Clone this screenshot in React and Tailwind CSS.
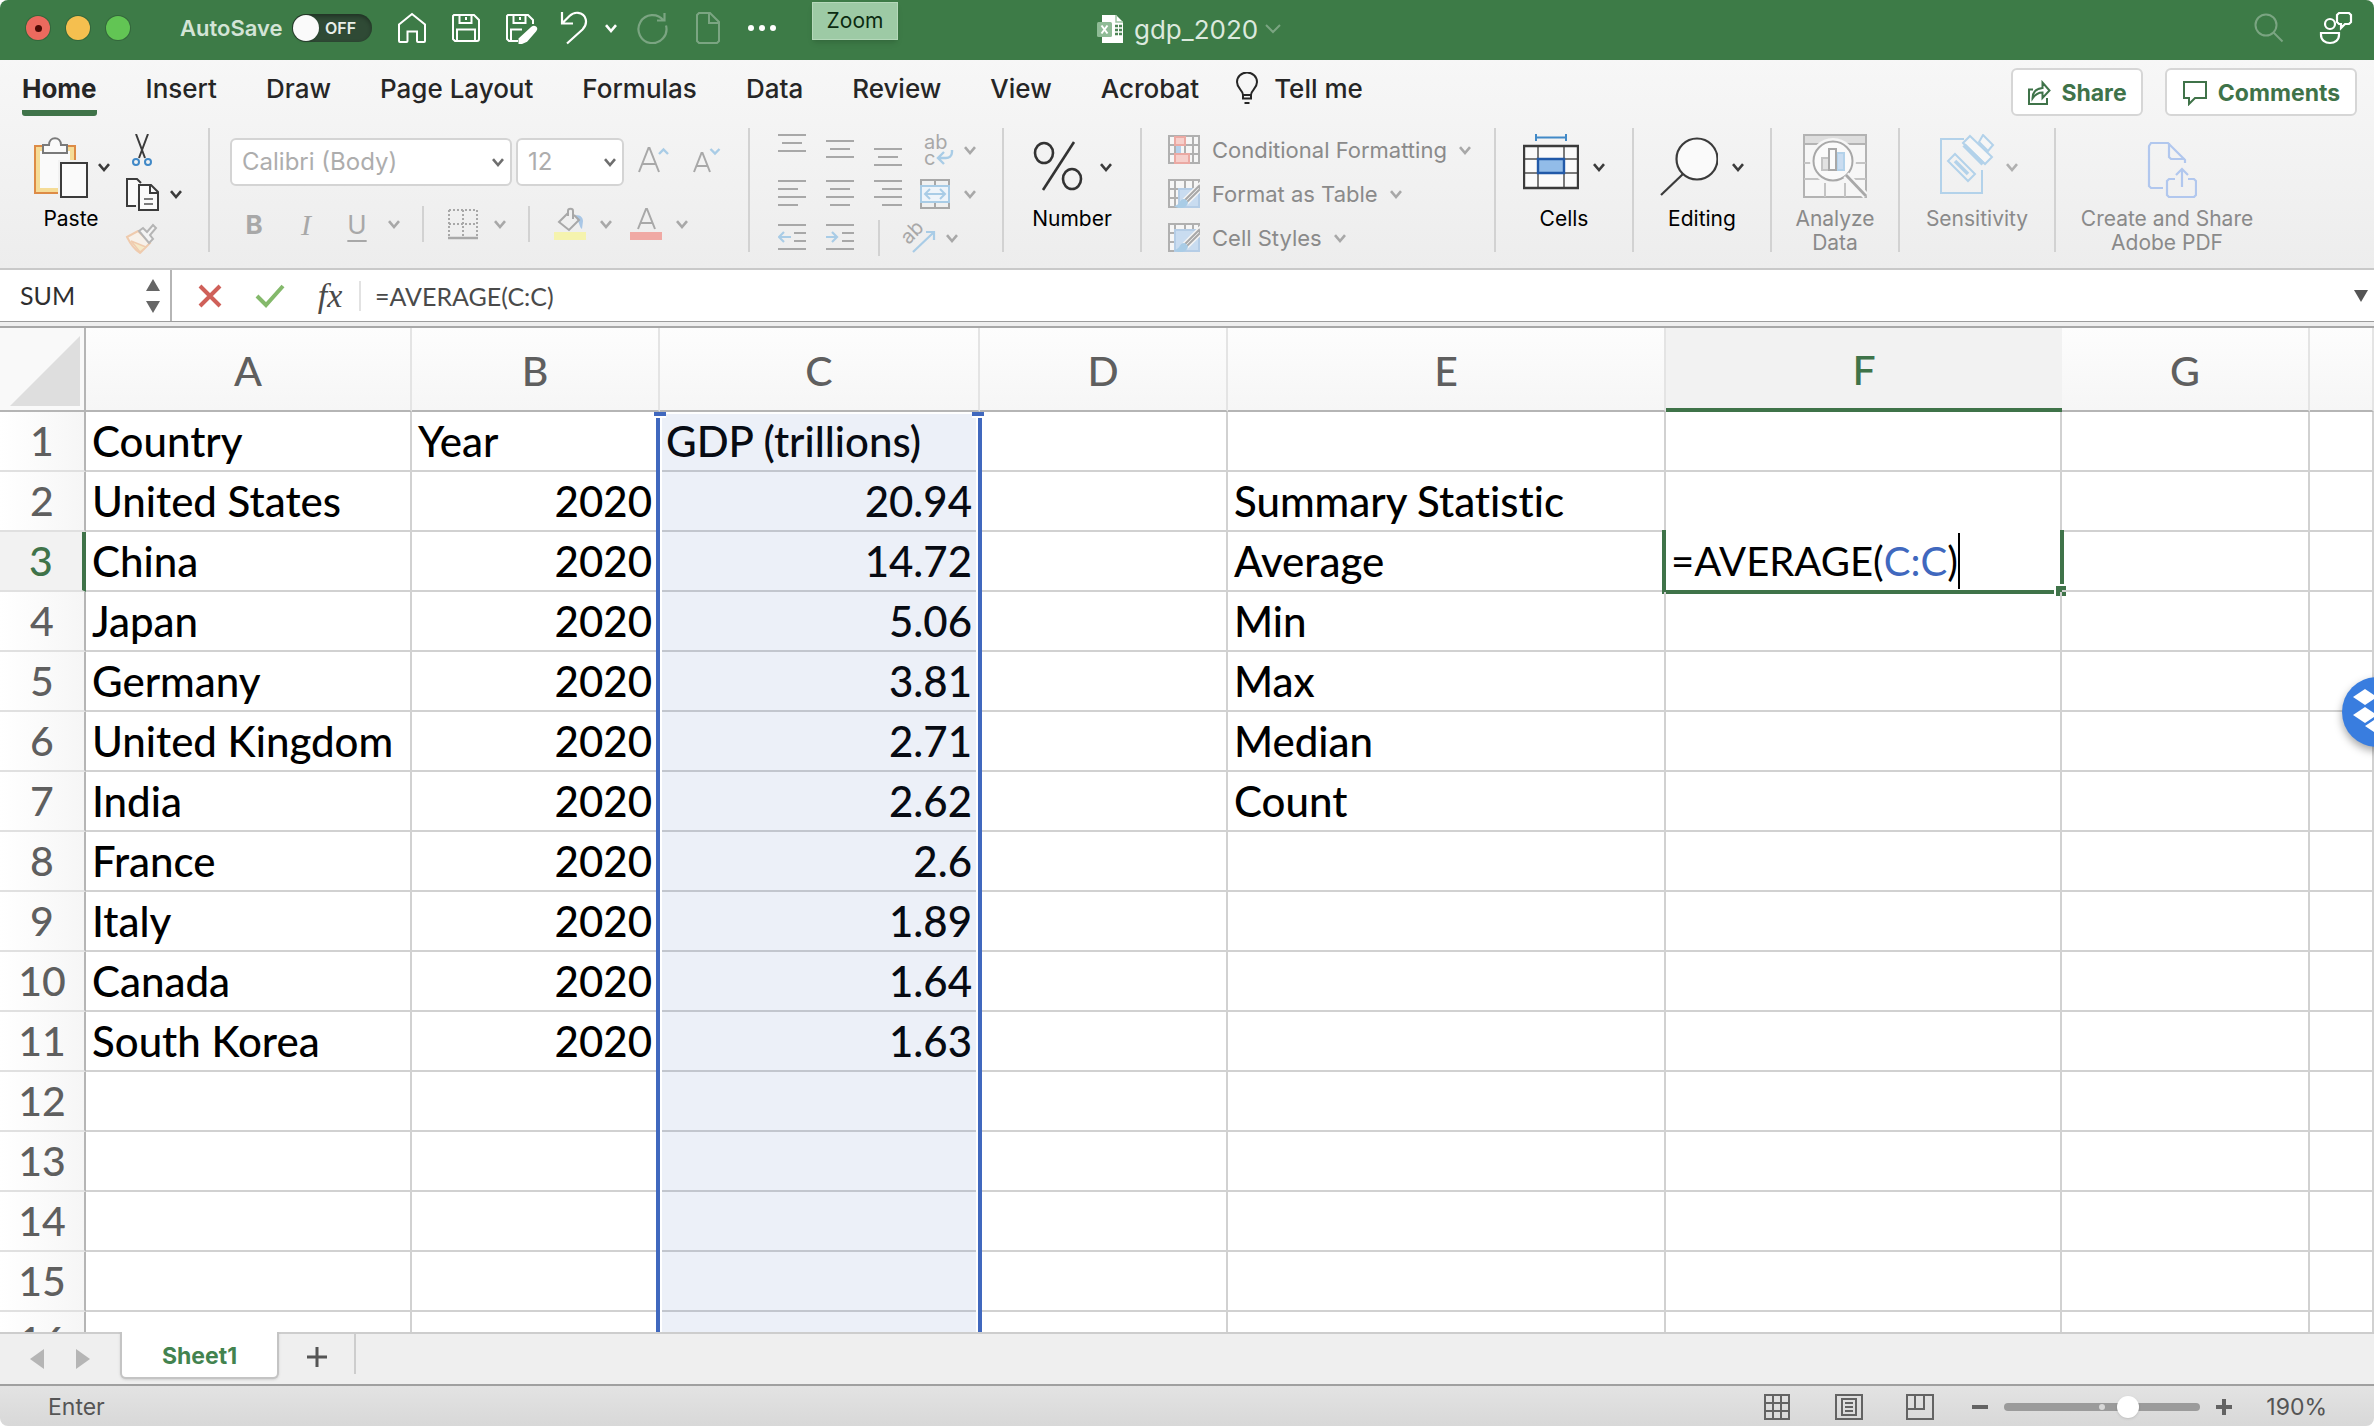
import React from "react";

const UI = "font-['Inter','Liberation_Sans',sans-serif]";
const SHEET = "font-['Lato','Liberation_Sans',sans-serif] [font-variant-ligatures:none]";

function Chevron({ className = "text-[#3b3b3b]" }) {
  return (
    <svg viewBox="0 0 12 9" className={`h-[9px] w-3 shrink-0 ${className}`} fill="none" stroke="currentColor" strokeWidth="2.6">
      <path d="M1 1.2 6 7l5-5.8" />
    </svg>
  );
}

function Icon({ w, h, className = "", children, ...rest }) {
  return (
    <svg width={w} height={h} viewBox={`0 0 ${w} ${h}`} fill="none" className={`shrink-0 ${className}`} {...rest}>
      {children}
    </svg>
  );
}

/* ---------- Title bar ---------- */

function QuickButton({ label, children, className = "" }) {
  return (
    <button type="button" aria-label={label} className={`flex shrink-0 items-center ${className}`}>
      {children}
    </button>
  );
}

function TitleBar() {
  return (
    <header className="relative flex h-[60px] shrink-0 items-center bg-[#3d7b47] pb-1 text-white">
      <div className="flex w-[180px] shrink-0 gap-4 pl-[26px]">
        <button type="button" aria-label="Close" className="flex size-6 items-center justify-center rounded-full bg-[#ec6a5e] ring-1 ring-[#33673b]">
          <span className="size-[7px] rounded-full bg-[#4d0a05]" />
        </button>
        <button type="button" aria-label="Minimize" className="size-6 rounded-full bg-[#f5bf4f] ring-1 ring-[#33673b]" />
        <button type="button" aria-label="Full screen" className="size-6 rounded-full bg-[#62c554] ring-1 ring-[#33673b]" />
      </div>
      <label className="flex w-48 shrink-0 items-center justify-between">
        <span className="whitespace-nowrap text-[22px] font-semibold text-[#d3e4d6]">AutoSave</span>
        <span className="relative flex h-7 w-20 items-center rounded-full bg-[#2f4a35] shadow-[inset_0_2px_4px_rgba(0,0,0,.35)]">
          <input type="checkbox" role="switch" className="absolute inset-0 size-full cursor-pointer opacity-0" />
          <span className="ml-px size-[26px] rounded-full bg-[#fafafa] shadow" />
          <span className="ml-[6px] text-[16px] font-semibold text-[#e8efe9]">OFF</span>
        </span>
      </label>

      <QuickButton label="Home" className="ml-[25px]">
        <Icon w={30} h={32} stroke="#fff" strokeWidth="2">
          <path d="M2 12.5 15 2l13 10.500V29a1 1 0 0 1-1 1h-6a1 1 0 0 1-1-1V19.500H10.500V29a1 1 0 0 1-1 1H3a1 1 0 0 1-1-1z" />
        </Icon>
      </QuickButton>
      <QuickButton label="Save" className="ml-6">
        <Icon w={30} h={30} stroke="#fff" strokeWidth="2">
          <path d="M3 2h20l5 5v19a2 2 0 0 1-2 2H4l-2-2V3zM8.500 2v8h12V2M6 28V16.500h18V28" />
          <path d="M15 4v3" />
        </Icon>
      </QuickButton>
      <QuickButton label="Save a copy" className="ml-6">
        <Icon w={34} h={32} stroke="#fff" strokeWidth="2">
          <path d="M13 29H4l-2-2V4l1-1h20l5 5v4M8.500 3v8h12V3M15 5v3M6 29V17.500h11" />
          <path d="M27 15.500c2.500-2 5.500.5 3.500 3L21.500 29 14.500 32v-5z" fill="#fff" />
        </Icon>
      </QuickButton>
      <QuickButton label="Undo" className="ml-[21px]">
        <Icon w={28} h={34} stroke="#fff" strokeWidth="2.200">
          <path d="M2 1v11.500h11M2 12.500 9.500 5C12 2.500 15 1.500 18 1.800c8.500.9 10.500 10.700 4.500 16.700L7 32.500" />
        </Icon>
      </QuickButton>
      <QuickButton label="Undo history" className="ml-[17px]">
        <Chevron className="text-white" />
      </QuickButton>
      <QuickButton label="Redo" className="ml-5">
        <Icon w={32} h={32} stroke="#7ba582" strokeWidth="2.200">
          <path d="M29 13.500A14 14 0 1 1 26.500 8.500M27.500 1v7.500H20" />
        </Icon>
      </QuickButton>
      <QuickButton label="New" className="ml-[26px]">
        <Icon w={26} h={32} stroke="#7ba582" strokeWidth="2">
          <path d="M4 1h11l9 9v19l-2 2H4l-2-2V3zM14 1v10h10" />
        </Icon>
      </QuickButton>
      <QuickButton label="More commands" className="ml-[27px] gap-[5px]">
        <span className="size-[6px] rounded-full bg-white" />
        <span className="size-[6px] rounded-full bg-white" />
        <span className="size-[6px] rounded-full bg-white" />
      </QuickButton>

      <div role="tooltip" className="absolute left-[812px] top-[2px] h-[38px] w-[86px] border border-[#b5d8ba] bg-[#9dcaa5] text-center text-[21px] leading-9 text-[#0b2b11] shadow-md">
        Zoom
      </div>

      <div className="absolute inset-x-0 top-0 mx-auto flex h-[58px] w-[180px] items-center whitespace-nowrap">
        <Icon w={27} h={30}>
          <path d="M5 1h14l7 7v21H5z" fill="#fff" />
          <path d="M19 1v7h7" stroke="#9dc3a3" strokeWidth="1.500" />
          <path d="M18 12h7M18 16h7M18 20h7" stroke="#4c8455" strokeWidth="2.500" strokeDasharray="3 1" />
          <rect x="0" y="8" width="15" height="15" rx="1.500" fill="#8fbb96" />
          <path d="m4.500 11.500 6 8m0-8-6 8" stroke="#fff" strokeWidth="2" />
        </Icon>
        <h1 className="ml-[10px] text-[26px] text-[#dce9de]">gdp_2020</h1>
        <Icon w={18} h={12} className="ml-[6px]" stroke="#7ba582" strokeWidth="2">
          <path d="m2 2 7 7 7-7" />
        </Icon>
      </div>

      <QuickButton label="Search" className="ml-auto">
        <Icon w={30} h={30} stroke="#7ba582" strokeWidth="2">
          <circle cx="12" cy="12" r="10.500" />
          <path d="m19.500 19.500 9 9" />
        </Icon>
      </QuickButton>
      <QuickButton label="Share with people" className="ml-[35px] mr-[21px]">
        <Icon w={34} h={34} stroke="#fff" strokeWidth="2.200">
          <circle cx="11" cy="13" r="5" />
          <path d="M2 22h18v2c0 5-4 8-9 8s-9-3-9-8zM20 2h10l2 2v7l-2 2h-4l-4 4v-4h-2l-2-2V4z" />
        </Icon>
      </QuickButton>
    </header>
  );
}

/* ---------- Ribbon ---------- */

const TABS = ["Home", "Insert", "Draw", "Page Layout", "Formulas", "Data", "Review", "View", "Acrobat"];

function Tabs() {
  return (
    <nav className="flex h-[60px] items-start pl-[22px] pr-[17px] text-[26px] font-medium text-[#262626]">
      <div className="flex gap-[49px]">
        {TABS.map((t, i) => (
          <button
            key={t}
            type="button"
            className={`h-14 whitespace-nowrap border-b-[6px] pt-2 leading-[42px] ${i === 0 ? "rounded-[3px] border-[#3f7349] font-bold" : "border-transparent"}`}
          >
            {t}
          </button>
        ))}
      </div>
      <button type="button" className="ml-[36px] flex h-14 items-center gap-[15px] whitespace-nowrap">
        <Icon w={24} h={32} stroke="#262626" strokeWidth="2">
          <path d="M8 23c0-5-6-6-6-13a10 9.500 0 0 1 20 0c0 7-6 8-6 13zM8 23v3.500h8V23M9.500 31h5" />
        </Icon>
        Tell me
      </button>
      <div className="ml-auto flex gap-[22px] pt-2 text-[23px] font-bold text-[#3f7349]">
        <button type="button" className="flex h-12 w-[132px] items-center justify-center gap-[10px] rounded-md border-2 border-[#d6d6d6] bg-white pt-[2px]">
          <Icon w={24} h={26} stroke="#3f7349" strokeWidth="2">
            <path d="M6 9.500H2V24h18v-6M5.500 18.500c0-7 4-10 10-10.500V2.500l7 8-7 7.500v-5.500c-4 0-7 1.500-10 6z" />
          </Icon>
          Share
        </button>
        <button type="button" className="flex h-12 w-[192px] items-center justify-center gap-[10px] rounded-md border-2 border-[#d6d6d6] bg-white pt-[2px]">
          <Icon w={26} h={26} stroke="#3f7349" strokeWidth="2">
            <path d="M2 2h22v16H13l-6 6v-6H2z" />
          </Icon>
          Comments
        </button>
      </div>
    </nav>
  );
}

function Group({ className = "", children, last }) {
  return (
    <section className={`flex h-[124px] shrink-0 ${last ? "" : "border-r-2 border-[#d2d2d2]"} ${className}`}>{children}</section>
  );
}

function BigButton({ label, icon, gap = "gap-[14px]", chevron = "text-[#3b3b3b]", text = "text-black", noChevron, className = "" }) {
  return (
    <button type="button" className={`flex shrink-0 flex-col items-center self-start pt-[6px] text-[21px] leading-6 ${text} ${className}`}>
      <span className={`flex h-[73px] items-start ${gap}`}>
        {icon}
        {!noChevron && (
          <span className="mt-[29px]">
            <Chevron className={chevron} />
          </span>
        )}
      </span>
      <span className="whitespace-pre text-center">{label}</span>
    </button>
  );
}

function SmallButton({ label, className = "", chevron, children }) {
  return (
    <button type="button" aria-label={label} className={`flex shrink-0 items-center gap-4 ${className}`}>
      {children}
      {chevron && <Chevron className={chevron} />}
    </button>
  );
}

function Combo({ label, value, options, className }) {
  return (
    <span className={`relative flex h-12 shrink-0 items-center ${className}`}>
      <select aria-label={label} defaultValue={value} className="size-full appearance-none rounded-md border-2 border-[#d4d4d4] bg-white pl-[10px] text-[24px] text-[#adadad]">
        {options.map((o) => (
          <option key={o}>{o}</option>
        ))}
      </select>
      <Chevron className="pointer-events-none absolute right-2 text-[#6e6e6e]" />
    </span>
  );
}

function Lines({ d, h = 28 }) {
  return (
    <Icon w={28} h={h} stroke="#a8a8a8" strokeWidth="2">
      <path d={d} />
    </Icon>
  );
}

function ClipboardGroup() {
  return (
    <Group className="w-[210px]">
      <BigButton
        label="Paste"
        gap="gap-[10px]"
        className="ml-8 w-[78px]"
        icon={
          <Icon w={56} h={66}>
            <path d="M3 12h40v47H3z" fill="#f5dc97" stroke="#dd8b46" strokeWidth="2" />
            <path d="M8 17h30v37H8z" fill="#fafafa" />
            <path d="M11 11h6c0-9 12-9 12 0h6v8H11z" fill="#fafafa" stroke="#7a7a7a" strokeWidth="2" />
            <path d="M26 26h30v34H26z" fill="#f2f2f2" />
            <path d="M29 29h26v34H29z" fill="#fafafa" stroke="#3b3b3b" strokeWidth="2" />
          </Icon>
        }
      />
      <div className="ml-[15px] flex flex-col items-start pt-[6px]">
        <SmallButton label="Cut" className="ml-[6px] h-8">
          <Icon w={22} h={32}>
            <path d="M5 0 14 24M17 0 8 24" stroke="#3b3b3b" strokeWidth="2" />
            <circle cx="5" cy="28" r="3" stroke="#4189c7" strokeWidth="2" />
            <circle cx="17" cy="28" r="3" stroke="#4189c7" strokeWidth="2" />
          </Icon>
        </SmallButton>
        <SmallButton label="Copy" chevron="text-[#3b3b3b]" className="mt-3 h-8 !gap-[11px]">
          <Icon w={34} h={34} stroke="#3b3b3b" strokeWidth="2">
            <path d="M11 29H2V2h10l4 4" fill="#fafafa" />
            <path d="M14 8h12l7 7v18H14z" fill="#fafafa" />
            <path d="M25 8v8h8" />
            <path d="M19 22h9M19 27h9" stroke="#7a7a7a" />
          </Icon>
        </SmallButton>
        <SmallButton label="Format painter" className="mt-[12px] h-8">
          <Icon w={34} h={32}>
            <path d="M2 15l11-6 12 12-10 10C9 27 5 21 2 15z" fill="#f7f1ea" stroke="#efcbae" strokeWidth="2" />
            <path d="M6 19l15 6-6 5z" fill="#f5e9c8" stroke="#efcbae" strokeWidth="1.500" />
            <path d="m14 9 4-3 4 4 6-7 3 3-6 7 3 4-4 4z" fill="#f4f4f4" stroke="#b5b5b5" strokeWidth="2" />
          </Icon>
        </SmallButton>
      </div>
    </Group>
  );
}

function FontGroup() {
  return (
    <Group className="w-[540px] flex-col pl-5 pt-[10px]">
      <div className="flex items-center">
        <Combo label="Font" value="Calibri (Body)" options={["Calibri (Body)", "Arial"]} className="w-[282px]" />
        <Combo label="Font size" value="12" options={["12", "14"]} className="ml-1 w-[108px]" />
        <SmallButton label="Increase font size" className="ml-[14px]">
          <Icon w={32} h={30} strokeWidth="2">
            <path d="M1 25 10.500 1h1L21 25M4 17h14" stroke="#a8a8a8" />
            <path d="m21 7 4.500-4.500L30 7" stroke="#a9cce6" strokeWidth="2.400" />
          </Icon>
        </SmallButton>
        <SmallButton label="Decrease font size" className="ml-[23px]">
          <Icon w={30} h={30} strokeWidth="2">
            <path d="M1 25 8.500 6h1L17 25M4 19h10" stroke="#a8a8a8" />
            <path d="m17.500 2 4.500 4.500L26.500 2" stroke="#a9cce6" strokeWidth="2.400" />
          </Icon>
        </SmallButton>
      </div>
      <div className="mt-[20px] flex h-9 items-center text-[26px] text-[#a8a8a8]">
        <button type="button" aria-label="Bold" className="ml-[14px] w-5 font-bold">B</button>
        <button type="button" aria-label="Italic" className="ml-8 w-5 font-['Liberation_Serif',serif] text-[30px] italic">I</button>
        <button type="button" aria-label="Underline" className="ml-[31px] w-5 underline decoration-2 underline-offset-[6px]">U</button>
        <Chevron className="ml-[21px] text-[#a8a8a8]" />
        <span className="ml-[22px] h-9 w-[2px] bg-[#d2d2d2]" />
        <SmallButton label="Borders" chevron="text-[#a8a8a8]" className="ml-6">
          <Icon w={30} h={32} stroke="#a8a8a8" strokeWidth="2">
            <path d="M1 2h28M1 16h28M1 2v27M15 2v27M29 2v27" strokeDasharray="2 2" />
            <path d="M0 30h30" strokeWidth="2.500" />
          </Icon>
        </SmallButton>
        <span className="ml-[22px] h-9 w-[2px] bg-[#d2d2d2]" />
        <SmallButton label="Fill color" chevron="text-[#a8a8a8]" className="ml-6 !gap-[14px]">
          <Icon w={32} h={34}>
            <path d="M0 25h32v8H0z" fill="#f5f3ae" />
            <path d="M22 8c5 0 7 3 7 6l-1 8c-3-2-2-6-5-9z" fill="#a9c7e6" />
            <path d="M14 6 5 15l10 8 10-10-5-5" stroke="#a8a8a8" strokeWidth="2" />
            <path d="M14 9V4c0-3 5-3 5 0v8" stroke="#a8a8a8" strokeWidth="2" />
          </Icon>
        </SmallButton>
        <SmallButton label="Font color" chevron="text-[#a8a8a8]" className="ml-[18px] !gap-[14px]">
          <Icon w={32} h={34}>
            <path d="M0 25h32v8H0z" fill="#f0a9a4" />
            <path d="M8 22 16 2h1l8 20M11 16h11" stroke="#a8a8a8" strokeWidth="2" />
          </Icon>
        </SmallButton>
      </div>
    </Group>
  );
}

function AlignmentGroup() {
  return (
    <Group className="w-[254px] flex-col pl-7 pt-[6px]">
      <div className="flex h-8 items-start gap-5">
        <SmallButton label="Align top"><Lines h={32} d="M0 1h28M4 9h20M0 17h28" /></SmallButton>
        <SmallButton label="Align middle"><Lines h={32} d="M0 7h28M4 15h20M0 23h28" /></SmallButton>
        <SmallButton label="Align bottom"><Lines h={32} d="M0 15h28M4 23h20M0 31h28" /></SmallButton>
        <SmallButton label="Wrap text" chevron="text-[#a8a8a8]" className="h-8 !gap-[10px]">
          <span className="relative h-8 w-[32px] pl-[2px] text-left text-[20px] leading-4 text-[#a8a8a8]">
            ab<br />c
            <Icon w={18} h={18} className="absolute bottom-0 right-0" stroke="#a9cce6" strokeWidth="2.400">
              <path d="M16 2v2c0 4-3 6-6 6H2M8 4l-6 6 6 6" />
            </Icon>
          </span>
        </SmallButton>
      </div>
      <div className="mt-3 flex h-8 items-center gap-5">
        <SmallButton label="Align left"><Lines d="M0 1h28M0 9h20M0 17h28M0 25h20" /></SmallButton>
        <SmallButton label="Center"><Lines d="M0 1h28M4 9h20M0 17h28M4 25h20" /></SmallButton>
        <SmallButton label="Align right"><Lines d="M0 1h28M8 9h20M0 17h28M8 25h20" /></SmallButton>
        <SmallButton label="Merge and center" chevron="text-[#a8a8a8]" className="-ml-[2px] !gap-[14px]">
          <Icon w={30} h={32} strokeWidth="2">
            <path d="M1 2h28v28H1zM15 2v6M15 24v6" stroke="#a8a8a8" />
            <path d="M1 8h28v16H1z" fill="#eef4fa" stroke="#a9cce6" />
            <path d="M6 16h18M10 11l-5 5 5 5M20 11l5 5-5 5" stroke="#a9cce6" />
          </Icon>
        </SmallButton>
      </div>
      <div className="mt-3 flex h-8 items-center gap-5">
        <SmallButton label="Decrease indent">
          <Icon w={28} h={28} strokeWidth="2">
            <path d="M0 1h28M16 9h12M16 17h12M0 25h28" stroke="#a8a8a8" />
            <path d="M1 13h12M6 8l-5 5 5 5" stroke="#a9cce6" strokeWidth="2.200" />
          </Icon>
        </SmallButton>
        <SmallButton label="Increase indent">
          <Icon w={28} h={28} strokeWidth="2">
            <path d="M0 1h28M16 9h12M16 17h12M0 25h28" stroke="#a8a8a8" />
            <path d="M0 13h11M6 8l5 5-5 5" stroke="#a9cce6" strokeWidth="2.200" />
          </Icon>
        </SmallButton>
        <span className="ml-1 h-9 w-[2px] bg-[#d2d2d2]" />
        <SmallButton label="Orientation" chevron="text-[#a8a8a8]" className="!gap-[10px]">
          <span className="relative h-8 w-9">
            <span className="absolute left-0 top-0 -rotate-45 text-[20px] leading-5 text-[#a8a8a8]">ab</span>
            <Icon w={26} h={24} className="absolute bottom-0 right-0" stroke="#a9cce6" strokeWidth="2.200">
              <path d="M3 22 23 3M16 2h8v8" />
            </Icon>
          </span>
        </SmallButton>
      </div>
    </Group>
  );
}

function TableGlyph({ kind }) {
  return (
    <Icon w={32} h={30} strokeWidth="2">
      <path d="M1 1h30v27H1zM1 10h30M1 19h30M7 1v27M17 1v27M25 1v27" fill="#f6f6f6" stroke="#b0b0b0" />
      {kind === "conditional" && (
        <>
          <path d="M7 2h10v8H7zM7 19h14v9H7z" fill="#f6cfcb" stroke="#eba9a3" />
          <path d="M8 11h5v7H8z" fill="#b5d1ec" />
        </>
      )}
      {kind !== "conditional" && (
        <>
          <path d={kind === "table" ? "M11 10h20v18H11z" : "M7 7h24v21H7z"} fill="#c9dcf0" stroke="#b5cde6" />
          <path d="M31 7 17 21l-1 3 3-1L32 10z" fill="#f4f4f4" stroke="#f4f4f4" strokeWidth="5" />
          <path d="M31 7 17 21l-1 3 3-1L32 10z" fill="#f4f4f4" stroke="#a8a8a8" />
          <path d="M17 20c-6-1-4 6-11 7 5 4 14 2 14-4z" fill="#a9cce6" />
        </>
      )}
    </Icon>
  );
}

function StylesGroup() {
  const rows = [
    ["conditional", "Conditional Formatting"],
    ["table", "Format as Table"],
    ["cell", "Cell Styles"],
  ];
  return (
    <Group className="w-[354px] flex-col gap-3 pl-[26px] pt-[6px] text-[22px] text-[#8a8a8a]">
      {rows.map(([kind, label]) => (
        <button key={kind} type="button" className="flex h-8 items-center gap-3 whitespace-nowrap">
          <TableGlyph kind={kind} />
          <span>{label}</span>
          <Chevron className="text-[#a8a8a8]" />
        </button>
      ))}
    </Group>
  );
}

function Ribbon() {
  return (
    <div className="shrink-0 border-b-2 border-[#c9c9c9] bg-linear-to-b from-[#f7f7f7] to-[#ededed]">
      <Tabs />
      <div className="flex h-[148px] overflow-hidden pt-2">
        <ClipboardGroup />
        <FontGroup />
        <AlignmentGroup />
        <Group className="w-[138px] justify-center">
          <BigButton
            label="Number"
            gap="gap-[17px]"
            icon={
              <Icon w={50} h={60} stroke="#333" strokeWidth="2.600">
                <ellipse cx="11" cy="19" rx="9" ry="10" />
                <ellipse cx="39" cy="45" rx="9" ry="10" />
                <path d="M41 8 10 56" />
              </Icon>
            }
          />
        </Group>
        <StylesGroup />
        <Group className="w-[138px] justify-center">
          <BigButton
            label="Cells"
            icon={
              <Icon w={56} h={56}>
                <path d="M13 3.500h30M13 0v7M43 0v7" stroke="#4189c7" strokeWidth="2" />
                <path d="M1 12h54v42H1z" fill="#fafafa" />
                <path d="M1 25h54M1 39h54M15 12v42M41 12v42" stroke="#7a7a7a" strokeWidth="2" />
                <path d="M15 25h26v14H15z" fill="#92bce8" stroke="#2159a8" strokeWidth="2.400" />
                <path d="M1 12h54v42H1z" stroke="#3b3b3b" strokeWidth="2.400" />
              </Icon>
            }
          />
        </Group>
        <Group className="w-[138px] justify-center">
          <BigButton
            label="Editing"
            icon={
              <Icon w={58} h={62} stroke="#3b3b3b" strokeWidth="2.200">
                <circle cx="37" cy="25" r="20.500" fill="#fafafa" />
                <path d="M23 40 1 61" />
              </Icon>
            }
          />
        </Group>
        <Group className="w-[128px] justify-center">
          <BigButton
            label={"Analyze\nData"}
            noChevron
            text="text-[#8a8a8a]"
            icon={
              <Icon w={64} h={64} stroke="#b3b3b3" strokeWidth="2">
                <path d="M1 1h62v62H1z" fill="#f6f6f6" />
                <path d="M1 1h62v9H1z" fill="#dedede" />
                <path d="M1 29h62M1 45h62M22 49v14M42 49v14" stroke="#c4c4c4" />
                <circle cx="30" cy="27" r="23" fill="#f6f6f6" stroke="none" />
                <circle cx="30" cy="27" r="19.500" fill="#fafafa" stroke="#a8a8a8" />
                <path d="M19 24h7v12h-7z" fill="#e2e2e2" stroke="#c4c4c4" />
                <path d="M34 19h7v17h-7z" fill="#c9dcf0" stroke="#b3d2ea" />
                <path d="M26 15h7v21h-7z" fill="#fafafa" stroke="#a8a8a8" />
                <path d="m43 41 20 21" stroke="#f6f6f6" strokeWidth="7" />
                <path d="m43 41 20 21" stroke="#a8a8a8" strokeWidth="2.800" />
              </Icon>
            }
          />
        </Group>
        <Group className="w-[156px] justify-center">
          <BigButton
            label="Sensitivity"
            gap="gap-[10px]"
            chevron="text-[#b0b0b0]"
            text="text-[#8a8a8a]"
            icon={
              <Icon w={56} h={62} className="ml-1" stroke="#b3d2ea" strokeWidth="2">
                <path d="M24 5H1v54h41V36" />
                <path d="m15 20 20 20-7 7L8 27z" fill="#f2f2f2" />
                <path d="m15 27 13 13" strokeWidth="3.500" />
                <path d="m43 1 10 10-5 6-9-9z" fill="#f6f6f6" />
                <path d="m30 2 22 21-7 7L23 9z" fill="#f6f6f6" />
                <path d="m24 11 19 19" strokeWidth="4.500" />
              </Icon>
            }
          />
        </Group>
        <Group last className="w-[222px] justify-center">
          <BigButton
            label={"Create and Share\nAdobe PDF"}
            noChevron
            text="text-[#8a8a8a]"
            icon={
              <Icon w={50} h={64} className="ml-[10px]" stroke="#b1c7ee" strokeWidth="2.200">
                <path d="M16 54H4l-2-2V12l2-3h17l17 17v3M22 9v14l2 2h14" />
                <path d="M28 45h-6l-2 2v14l2 2h25l2-2V47l-2-2h-6M35 53V35M29 41l6-6 6 6" />
              </Icon>
            }
          />
        </Group>
      </div>
    </div>
  );
}

/* ---------- Formula bar ---------- */

function FormulaBar() {
  return (
    <div className={`flex h-[52px] shrink-0 items-center border-b border-[#9d9d9d] bg-white ${SHEET}`}>
      <div className="flex h-full w-[172px] shrink-0 items-center border-r-2 border-[#b5b5b5] pl-5 pr-[10px]">
        <input aria-label="Name box" defaultValue="SUM" className="w-full min-w-0 bg-transparent text-[25px] text-[#2f2f2f] outline-none" />
        <Icon w={14} h={36} fill="#666">
          <path d="M7 1l7 12H0zM7 35l7-12H0z" fill="#666" />
        </Icon>
      </div>
      <button type="button" aria-label="Cancel" className="ml-[26px]">
        <Icon w={24} h={24} stroke="#cf6059" strokeWidth="4">
          <path d="m2 2 20 20M22 2 2 22" />
        </Icon>
      </button>
      <button type="button" aria-label="Enter" className="ml-[33px]">
        <Icon w={30} h={24} stroke="#84b96b" strokeWidth="4">
          <path d="m2 12 9 9L28 2" />
        </Icon>
      </button>
      <button type="button" aria-label="Insert function" className="ml-[30px] w-[30px] font-['Liberation_Serif',serif] text-[34px] italic leading-[48px] text-[#4a4a4a]">
        fx
      </button>
      <span className="ml-[14px] h-[30px] w-[2px] bg-[#e2e2e2]" />
      <input aria-label="Formula" defaultValue="=AVERAGE(C:C)" className="ml-[14px] min-w-0 flex-1 bg-transparent pt-[2px] text-[25px] text-[#4a4a4a] outline-none" />
      <button type="button" aria-label="Expand formula bar" className="mr-[6px]">
        <Icon w={14} h={12}>
          <path d="M0 0h14L7 12z" fill="#555" />
        </Icon>
      </button>
    </div>
  );
}

/* ---------- Sheet ---------- */

const COLS = [
  ["A", "w-[326px]"],
  ["B", "w-[248px]"],
  ["C", "w-[320px]"],
  ["D", "w-[248px]"],
  ["E", "w-[438px]"],
  ["F", "w-[396px]"],
  ["G", "w-[248px]"],
  ["", ""],
];

const DATA = {
  1: { A: "Country", B: "Year", C: "GDP (trillions)" },
  2: { A: "United States", B: 2020, C: 20.94, E: "Summary Statistic" },
  3: { A: "China", B: 2020, C: 14.72, E: "Average" },
  4: { A: "Japan", B: 2020, C: 5.06, E: "Min" },
  5: { A: "Germany", B: 2020, C: 3.81, E: "Max" },
  6: { A: "United Kingdom", B: 2020, C: 2.71, E: "Median" },
  7: { A: "India", B: 2020, C: 2.62, E: "Count" },
  8: { A: "France", B: 2020, C: 2.6 },
  9: { A: "Italy", B: 2020, C: 1.89 },
  10: { A: "Canada", B: 2020, C: 1.64 },
  11: { A: "South Korea", B: 2020, C: 1.63 },
};

function CellEditor() {
  return (
    <div className="absolute -left-1 -right-1 -top-[2px] bottom-[-4px] flex items-center border-x-4 border-b-4 border-[#3f7349] bg-white pl-[5px] pt-[2px] text-[40px] font-normal text-black">
      <span>=AVERAGE(</span>
      <span className="text-[#4068be]">C:C</span>
      <span>)</span>
      <span className="h-14 w-[2px] bg-black" />
      <span className="absolute -bottom-[6px] -right-[6px] size-3 border-l-2 border-t-2 border-white bg-[#3f7349]" />
    </div>
  );
}

function ColumnSelection() {
  return (
    <div className="pointer-events-none absolute -left-1 -right-1 top-full z-10 mt-[2px] h-screen border-x-4 border-[#4068be]">
      <div className="h-full border-x-2 border-t-2 border-white bg-[#4068be]/10 bg-clip-padding" />
      <span className="absolute -left-[6px] top-0 h-[6px] w-3 border-b-2 border-white bg-[#4068be]" />
      <span className="absolute -right-[6px] top-0 h-[6px] w-3 border-b-2 border-white bg-[#4068be]" />
    </div>
  );
}

function Sheet() {
  const rows = Array.from({ length: 16 }, (_, i) => i + 1);
  return (
    <main className={`relative min-h-0 flex-1 overflow-hidden bg-white text-[41px] leading-[58px] ${SHEET}`}>
      <table className="w-full table-fixed border-separate border-spacing-0">
        <colgroup>
          <col className="w-[86px]" />
          {COLS.map(([name, w]) => (
            <col key={name} className={w} />
          ))}
        </colgroup>
        <thead>
          <tr className="h-[84px] text-[#5f5f5f]">
            <th className="border-b-2 border-r-2 border-[#b5b5b5] bg-[#f9f9f9] p-0 align-bottom">
              <button type="button" aria-label="Select all" className="ml-[10px] block">
                <Icon w={70} h={74}>
                  <path d="M70 0v70H0z" fill="#dedede" />
                </Icon>
              </button>
            </th>
            {COLS.map(([name]) => (
              <th
                key={name}
                scope="col"
                className={
                  name === "F"
                    ? "relative border-b-4 border-[#3f7349] bg-[#f2f2f2] p-0 pt-1 font-medium text-[#3f7349]"
                    : "relative border-b-2 border-r-2 border-b-[#b5b5b5] border-r-[#e4e4e4] bg-linear-to-b from-[#fdfdfd] to-[#f6f6f6] p-0 pt-1 font-medium"
                }
              >
                {name}
                {name === "C" && <ColumnSelection />}
              </th>
            ))}
          </tr>
        </thead>
        <tbody>
          {rows.map((r) => (
            <tr key={r} className="h-[60px]">
              <th
                scope="row"
                className={
                  r === 3
                    ? "border-b-2 border-r-4 border-b-[#e0e0e0] border-r-[#3f7349] bg-[#f2f2f2] p-0 font-medium text-[#3f7349]"
                    : "border-b-2 border-r-2 border-b-[#e0e0e0] border-r-[#b5b5b5] bg-linear-to-r from-white to-[#f6f6f6] p-0 font-medium text-[#5f5f5f]"
                }
              >
                {r}
              </th>
              {COLS.map(([name]) => {
                const v = DATA[r]?.[name];
                const border = name === "F" && r === 2 ? "border-b-white" : "border-b-[#d1d1d1]";
                return (
                  <td
                    key={name}
                    className={`relative whitespace-nowrap border-b-2 border-r-2 border-r-[#d1d1d1] px-[6px] py-0 text-[42px] font-medium text-black ${border} ${typeof v === "number" ? "text-right" : "text-left"}`}
                  >
                    {v}
                    {name === "F" && r === 3 && <CellEditor />}
                  </td>
                );
              })}
            </tr>
          ))}
        </tbody>
      </table>
      <button type="button" aria-label="Dropbox" className="absolute -right-[38px] top-[349px] z-20 flex size-[70px] items-center justify-center rounded-full bg-[#397ddf] shadow-[0_4px_8px_rgba(0,0,0,.35)]">
        <Icon w={48} h={46} fill="#fff">
          <path d="M12 0l12 8-12 8L0 8zM36 0l12 8-12 8-12-8zM12 18l12 8-12 8-12-8zM36 18l12 8-12 8-12-8zM24 29l12 8-12 8-12-8z" fill="#fff" />
        </Icon>
      </button>
    </main>
  );
}

/* ---------- Bottom bars ---------- */

function SheetTabs() {
  return (
    <div className="flex h-[52px] shrink-0 items-start border-t-2 border-[#cdcdcd] bg-[#efefef]">
      <button type="button" aria-label="Previous sheet" className="ml-[30px] mt-[15px]">
        <Icon w={14} h={20}><path d="M14 0v20L0 10z" fill="#b5b5b5" /></Icon>
      </button>
      <button type="button" aria-label="Next sheet" className="ml-8 mt-[15px]">
        <Icon w={14} h={20}><path d="M0 0v20l14-10z" fill="#b5b5b5" /></Icon>
      </button>
      <button type="button" className="-mt-[2px] ml-[30px] h-[47px] w-[159px] rounded-b-md border-2 border-t-0 border-[#c4c4c4] bg-white pt-1 text-[23px] font-bold text-[#43834f] shadow-sm">
        Sheet1
      </button>
      <button type="button" aria-label="New sheet" className="ml-7 mt-[13px]">
        <Icon w={20} h={20} stroke="#555" strokeWidth="3"><path d="M10 0v20M0 10h20" /></Icon>
      </button>
      <span className="ml-[27px] h-10 w-[2px] bg-[#cdcdcd]" />
    </div>
  );
}

function StatusBar() {
  return (
    <footer className="flex h-[42px] shrink-0 items-center border-t-2 border-[#a0a0a0] bg-linear-to-b from-[#e3e3e3] to-[#d8d8d8] pt-[2px] text-[23px] text-[#555]">
      <span className="ml-12">Enter</span>
      <button type="button" aria-label="Normal view" className="ml-auto">
        <Icon w={26} h={26} stroke="#636363" strokeWidth="2">
          <path d="M1 1h24v24H1zM1 9h24M1 17h24M9 1v24M17 1v24" />
        </Icon>
      </button>
      <button type="button" aria-label="Page layout view" className="ml-[45px]">
        <Icon w={28} h={26} stroke="#636363" strokeWidth="2">
          <path d="M1 1h26v24H1zM7 5h14v16H7zM10 9h8M10 13h8M10 17h8" />
        </Icon>
      </button>
      <button type="button" aria-label="Page break view" className="ml-[43px]">
        <Icon w={28} h={26} stroke="#636363" strokeWidth="2">
          <path d="M1 1h26v24H1zM9 1v14M18 1v14H1" />
        </Icon>
      </button>
      <button type="button" aria-label="Zoom out" className="ml-[38px] h-1 w-4 bg-[#636363]" />
      <span className="relative ml-4 flex w-[196px] items-center">
        <input
          type="range"
          aria-label="Zoom"
          min="0"
          max="100"
          defaultValue="65"
          className="h-2 w-full appearance-none rounded-full bg-[#9b9b9b] [&::-webkit-slider-thumb]:relative [&::-webkit-slider-thumb]:z-10 [&::-webkit-slider-thumb]:size-[22px] [&::-webkit-slider-thumb]:appearance-none [&::-webkit-slider-thumb]:rounded-full [&::-webkit-slider-thumb]:bg-white [&::-webkit-slider-thumb]:shadow"
        />
        <span className="pointer-events-none absolute left-1/2 size-[6px] -translate-x-1/2 rounded-full bg-[#d8d8d8]" />
      </span>
      <button type="button" aria-label="Zoom in" className="ml-4">
        <Icon w={16} h={16} stroke="#636363" strokeWidth="4"><path d="M8 0v16M0 8h16" /></Icon>
      </button>
      <span className="ml-[34px] mr-[47px]">190%</span>
    </footer>
  );
}

export default function App() {
  return (
    <div className={`flex h-screen flex-col overflow-hidden rounded-lg bg-white ${UI}`}>
      <TitleBar />
      <Ribbon />
      <FormulaBar />
      <div className="h-[6px] shrink-0 border-b-2 border-[#a8a8a8] bg-[#efefef]" />
      <Sheet />
      <SheetTabs />
      <StatusBar />
    </div>
  );
}
